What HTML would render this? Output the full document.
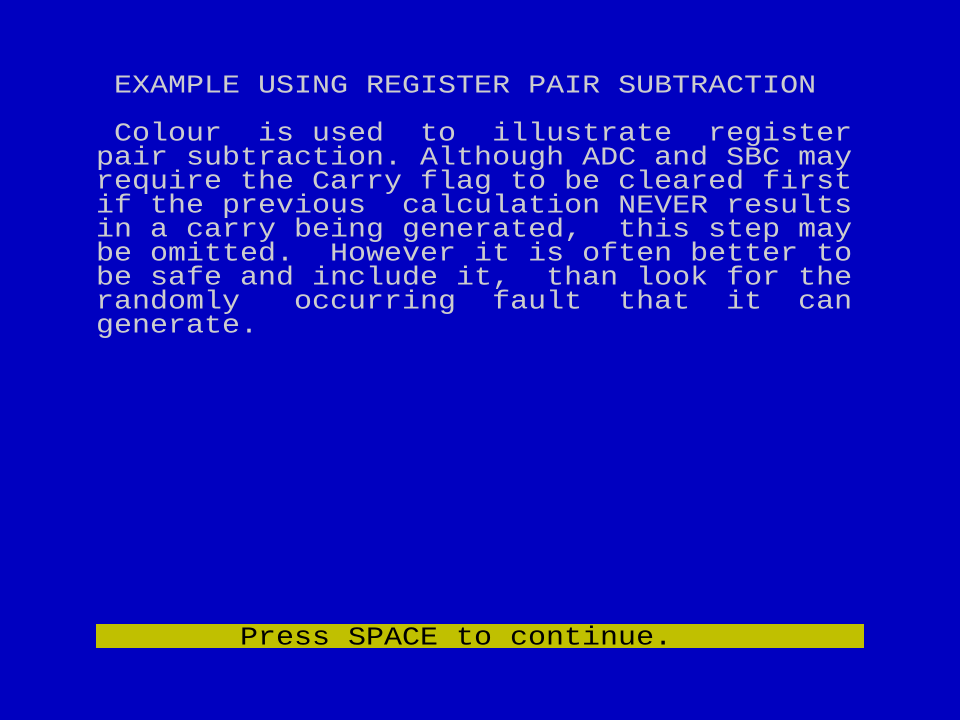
<!DOCTYPE html>
<html><head><meta charset="utf-8"><style>
html,body{margin:0;padding:0;}
body{width:960px;height:720px;background:#0000c0;position:relative;overflow:hidden;
font-family:"Liberation Mono",monospace;font-size:30px;}
.r{position:absolute;left:96px;height:24px;line-height:24px;white-space:pre;color:#cdcdcd;margin-top:2px;transform:scaleY(0.85);transform-origin:50% 60%;}
.bar{position:absolute;left:96px;top:624px;width:768px;height:24px;background:#c0c000;}
.bar span{position:absolute;left:144px;top:2px;line-height:24px;white-space:pre;color:#000;transform:scaleY(0.85);transform-origin:50% 60%;}
</style></head><body>
<div class="r" style="top:72px"> EXAMPLE USING REGISTER PAIR SUBTRACTION</div>
<div class="r" style="top:120px"> Colour  is used  to  illustrate  register</div>
<div class="r" style="top:144px">pair subtraction. Although ADC and SBC may</div>
<div class="r" style="top:168px">require the Carry flag to be cleared first</div>
<div class="r" style="top:192px">if the previous  calculation NEVER results</div>
<div class="r" style="top:216px">in a carry being generated,  this step may</div>
<div class="r" style="top:240px">be omitted.  However it is often better to</div>
<div class="r" style="top:264px">be safe and include it,  than look for the</div>
<div class="r" style="top:288px">randomly   occurring  fault  that  it  can</div>
<div class="r" style="top:312px">generate.</div>
<div class="bar"><span>Press SPACE to continue.</span></div>
</body></html>
